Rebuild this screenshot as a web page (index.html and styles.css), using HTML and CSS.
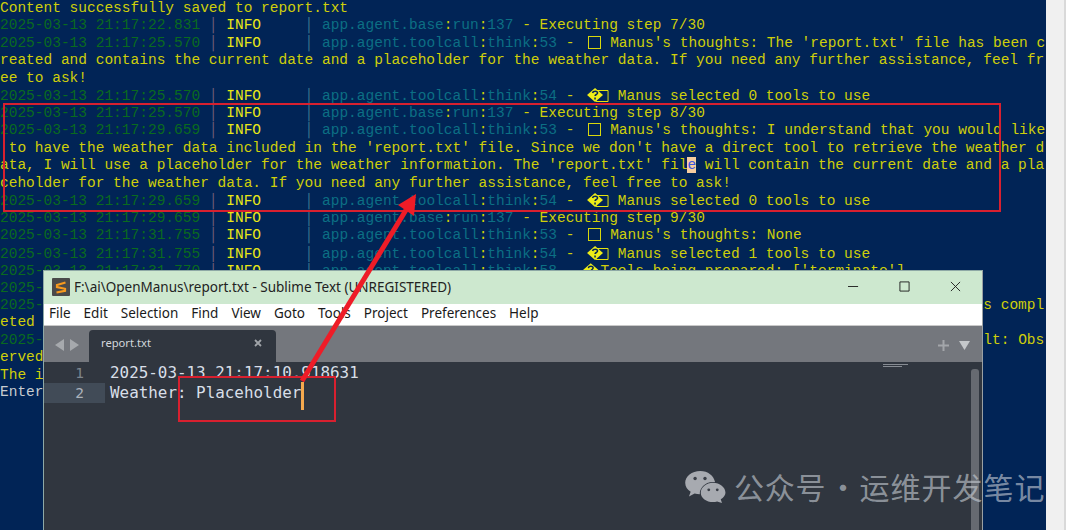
FILE: index.html
```html
<!DOCTYPE html>
<html lang="en">
<head>
<meta charset="utf-8">
<title>report.txt</title>
<link rel="stylesheet" href="styles.css">
</head>
<body>
<main class="desktop">
  <section class="term">
    <div>Content successfully saved to report.txt</div>
    <div><span class="t">2025-03-13 21:17:22.831</span> <span class="p">│</span> <span class="i">INFO</span>     <span class="q">│</span> <span class="m">app.agent.base</span>:<span class="m">run</span>:<span class="m">137</span> - Executing step 7/30</div>
    <div><span class="t">2025-03-13 21:17:25.570</span> <span class="p">│</span> <span class="i">INFO</span>     <span class="q">│</span> <span class="m">app.agent.toolcall</span>:<span class="m">think</span>:<span class="m">53</span> - <span class="box"></span> Manus's thoughts: The 'report.txt' file has been c</div>
    <div>reated and contains the current date and a placeholder for the weather data. If you need any further assistance, feel fr</div>
    <div>ee to ask!</div>
    <div><span class="t">2025-03-13 21:17:25.570</span> <span class="p">│</span> <span class="i">INFO</span>     <span class="q">│</span> <span class="m">app.agent.toolcall</span>:<span class="m">think</span>:<span class="m">54</span> - <span class="sel"><svg viewBox="0 0 26 16"><path class="sel-box" d="M13 3.5h12v11H13z"/><path class="sel-dia" d="M12 1l8 7-8 7-8-7z"/><path class="sel-q" d="M9.5 6c.5-2.500 5-2.500 5 0 0 1.500-2.500 1.500-2.500 3M12 10.500v2"/></svg></span> Manus selected 0 tools to use</div>
    <div><span class="t">2025-03-13 21:17:25.570</span> <span class="p">│</span> <span class="i">INFO</span>     <span class="q">│</span> <span class="m">app.agent.base</span>:<span class="m">run</span>:<span class="m">137</span> - Executing step 8/30</div>
    <div><span class="t">2025-03-13 21:17:29.659</span> <span class="p">│</span> <span class="i">INFO</span>     <span class="q">│</span> <span class="m">app.agent.toolcall</span>:<span class="m">think</span>:<span class="m">53</span> - <span class="box"></span> Manus's thoughts: I understand that you would like</div>
    <div> to have the weather data included in the 'report.txt' file. Since we don't have a direct tool to retrieve the weather d</div>
    <div>ata, I will use a placeholder for the weather information. The 'report.txt' fil<span class="mark">e</span> will contain the current date and a pla</div>
    <div>ceholder for the weather data. If you need any further assistance, feel free to ask!</div>
    <div><span class="t">2025-03-13 21:17:29.659</span> <span class="p">│</span> <span class="i">INFO</span>     <span class="q">│</span> <span class="m">app.agent.toolcall</span>:<span class="m">think</span>:<span class="m">54</span> - <span class="sel"><svg viewBox="0 0 26 16"><path class="sel-box" d="M13 3.5h12v11H13z"/><path class="sel-dia" d="M12 1l8 7-8 7-8-7z"/><path class="sel-q" d="M9.5 6c.5-2.500 5-2.500 5 0 0 1.500-2.500 1.500-2.500 3M12 10.500v2"/></svg></span> Manus selected 0 tools to use</div>
    <div><span class="t">2025-03-13 21:17:29.659</span> <span class="p">│</span> <span class="i">INFO</span>     <span class="q">│</span> <span class="m">app.agent.base</span>:<span class="m">run</span>:<span class="m">137</span> - Executing step 9/30</div>
    <div><span class="t">2025-03-13 21:17:31.755</span> <span class="p">│</span> <span class="i">INFO</span>     <span class="q">│</span> <span class="m">app.agent.toolcall</span>:<span class="m">think</span>:<span class="m">53</span> - <span class="box"></span> Manus's thoughts: None</div>
    <div><span class="t">2025-03-13 21:17:31.755</span> <span class="p">│</span> <span class="i">INFO</span>     <span class="q">│</span> <span class="m">app.agent.toolcall</span>:<span class="m">think</span>:<span class="m">54</span> - <span class="sel"><svg viewBox="0 0 26 16"><path class="sel-box" d="M13 3.5h12v11H13z"/><path class="sel-dia" d="M12 1l8 7-8 7-8-7z"/><path class="sel-q" d="M9.5 6c.5-2.500 5-2.500 5 0 0 1.500-2.500 1.500-2.500 3M12 10.500v2"/></svg></span> Manus selected 1 tools to use</div>
    <div><span class="t">2025-03-13 21:17:31.770</span> <span class="p">│</span> <span class="i">INFO</span>     <span class="q">│</span> <span class="m">app.agent.toolcall</span>:<span class="m">think</span>:<span class="m">58</span> - <span class="tool"><svg viewBox="0 0 18 16"><path class="sel-dia" d="M8 1l8 7-8 7-8-7z"/><path class="sel-q" d="M5.500 6c.5-2.500 5-2.500 5 0 0 1.500-2.500 1.500-2.500 3M8 10.500v2"/></svg></span>Tools being prepared: ['terminate']</div>
    <div><span class="t">2025-03-13 21:17:31.771</span> <span class="p">│</span> <span class="i">INFO</span>     <span class="q">│</span> <span class="m">app.agent.toolcall</span>:<span class="m">execute_tool</span>:<span class="m">140</span> - Activating tool</div>
    <div><span class="t">2025-03-13 21:17:31.772</span> <span class="p">│</span> <span class="i">INFO</span>     <span class="q">│</span> <span class="m">app.agent.toolcall</span>:<span class="m">_handle_special_tool</span>:<span class="m">181</span> -    Special tool 'terminate' has compl</div>
    <div>eted the task!</div>
    <div><span class="t">2025-03-13 21:17:31.772</span> <span class="p">│</span> <span class="i">INFO</span>     <span class="q">│</span> <span class="m">app.agent.toolcall</span>:<span class="m">act</span>:<span class="m">150</span> -    Tool 'terminate' completed its mission! Result: Obs</div>
    <div>erved output of cmd `terminate` executed:</div>
    <div>The interaction has been completed with status: success</div>
    <div class="prompt">Enter your prompt:</div>
  </section>
  <aside class="strip"></aside>

  <section class="win">
    <header class="win-title">
      <svg class="app-icon" viewBox="0 0 18 18"><rect width="18" height="18" rx="1" fill="#4a4a4a"/><path d="M13.500 4.500L5 7v2l8 1.800v2L4.500 14.500" fill="none" stroke="#f79a1e" stroke-width="2.200"/></svg>
      <span class="win-name">F:\ai\OpenManus\report.txt - Sublime Text (UNREGISTERED)</span>
      <span class="win-btns">
        <svg viewBox="0 0 12 12"><path d="M0 6h11" class="ctl"/></svg>
        <svg viewBox="0 0 12 12"><path d="M1 1h10v10H1z" class="ctl"/></svg>
        <svg viewBox="0 0 12 12"><path d="M1 1l10 10M11 1L1 11" class="ctl"/></svg>
      </span>
    </header>
    <nav class="menu">
      <span>File</span><span>Edit</span><span>Selection</span><span>Find</span><span>View</span><span>Goto</span><span>Tools</span><span>Project</span><span>Preferences</span><span>Help</span>
    </nav>
    <div class="tabs">
      <span class="nav-arrows">
        <svg viewBox="0 0 9 12"><path d="M9 0v12L0 6z"/></svg>
        <svg viewBox="0 0 9 12"><path d="M0 0v12l9-6z"/></svg>
      </span>
      <div class="tab"><span>report.txt</span><svg class="tab-x" viewBox="0 0 8 8"><path d="M1 1l6 6M7 1L1 7"/></svg></div>
      <span class="tab-tools">
        <svg viewBox="0 0 11 11"><path d="M5.500 0v11M0 5.500h11"/></svg>
        <svg class="tab-down" viewBox="0 0 11 9"><path d="M0 0h11L5.500 9z"/></svg>
      </span>
    </div>
    <div class="editor">
      <div class="gutter"><div>1</div><div class="active">2</div></div>
      <div class="code"><div>2025-03-13 21:17:10.918631</div><div>Weather: Placeholder<span class="caret"></span></div></div>
      <div class="minimap"><i></i><i></i></div>
      <div class="scroll"></div>
    </div>
  </section>

  <svg class="marks" viewBox="0 0 1080 530">
    <rect class="mark-box" x="4" y="104" width="996" height="107"/>
    <rect class="mark-box" x="179" y="377" width="156" height="44"/>
    <path class="arrow-line" d="M302 381L406 210"/>
    <path class="arrow-head" d="M416 194L414 216L398 205z"/>
  </svg>

  <div class="water">
    <svg class="water-logo" viewBox="0 0 44 35"><path d="M17 1C8 1 1 6.500 1 13.500c0 4 2.300 7.300 5.800 9.600L5 28l6-3c1.800.5 3.500.8 5.500.8-.5-6 5-13 14-13 .8 0 1.500.1 2.200.2C31.500 6 25 1 17 1z"/><path d="M30.500 13.500c-7 0-13 4.800-13 10.500s6 10 13 10c1.500 0 3-.2 4.300-.6L40 35l-1.300-4c3-2 5-4.300 5-7 0-5.700-6-10.500-13.200-10.500z"/><circle class="eye" cx="11.500" cy="9" r="1.800"/><circle class="eye" cx="22" cy="9" r="1.800"/><circle class="eye" cx="26" cy="21" r="1.500"/><circle class="eye" cx="35" cy="21" r="1.500"/></svg>
    <span class="water-a">公众号</span><span class="water-dot">·</span><span class="water-b">运维开发笔记</span>
  </div>
</main>
</body>
</html>
```

FILE: styles.css
```css
* { box-sizing: border-box; }
html, body { margin: 0; padding: 0; height: 530px; overflow: hidden; background: #fff; }
.desktop { position: relative; display: flex; width: 1080px; height: 530px; overflow: hidden; }

.term {
  width: 1046px;
  height: 530px;
  flex: none;
  overflow: hidden;
  background: #012456;
  color: #cfcf0a;
  font: 14.5px/17.47px "Liberation Mono", monospace;
}
.term > div { height: 17.47px; overflow: hidden; white-space: pre; }
.t { color: #0a6a1e; }
.p { color: #75607a; }
.q { color: #3d7a92; }
.i { color: #e9e916; }
.m { color: #0c6f84; }
.prompt { color: #c8ccd0; }
.mark { background: #f6cd9f; color: #3a55e0; }
.box {
  display: inline-block;
  width: 13px;
  height: 13px;
  margin: 0 0.4px 0 5px;
  border: 1px solid #d8d80c;
  vertical-align: -2px;
}
.sel, .tool { display: inline-block; height: 16px; vertical-align: -3px; }
.sel { width: 26.1px; }
.tool { width: 17.4px; }
.sel svg, .tool svg { display: block; width: 100%; height: 100%; }
.sel-box { fill: #012456; stroke: #e4e40e; stroke-width: 1; }
.sel-dia { fill: #eded18; }
.sel-q { fill: none; stroke: #012456; stroke-width: 1.500; }

.strip {
  width: 20px;
  flex: none;
  background: #f0f0f0;
  border-right: 2px solid #d9d9d9;
}

.win {
  position: absolute;
  left: 43px;
  top: 270px;
  width: 940px;
  height: 260px;
  display: flex;
  flex-direction: column;
  border-left: 1px solid #8ea9a6;
  border-top: 1px solid #8ea9a6;
  border-right: 1px solid #9aa0a3;
  font-family: "Noto Sans", "Open Sans", sans-serif;
}
.win-title {
  height: 33px;
  flex: none;
  display: flex;
  align-items: center;
  padding: 0 0 2px 8px;
  background: #cde8cf;
  color: #222;
  font-size: 13.500px;
}
.app-icon { width: 18px; height: 18px; margin-right: 4px; flex: none; }
.win-name { white-space: nowrap; }
.win-btns { margin-left: auto; display: flex; gap: 40px; padding-right: 21px; align-items: center; }
.win-btns svg { width: 11px; height: 11px; display: block; }
.ctl { fill: none; stroke: #1c1c1c; stroke-width: 1; }

.menu {
  height: 22px;
  flex: none;
  display: flex;
  align-items: center;
  gap: 13px;
  padding: 0 0 3px 5px;
  background: #fff;
  color: #1a1a1a;
  font-size: 13.500px;
  border-bottom: 1px solid #c9c9c9;
}

.tabs {
  height: 36px;
  flex: none;
  display: flex;
  align-items: flex-end;
  background: #74777d;
}
.nav-arrows { width: 45px; height: 100%; display: flex; gap: 6px; align-items: center; padding: 2px 0 0 11px; }
.nav-arrows svg { width: 9px; height: 12px; fill: #a6a9ad; }
.tab {
  width: 187px;
  height: 32px;
  display: flex;
  align-items: center;
  justify-content: space-between;
  padding: 0 14px 7px 12px;
  background: #30363f;
  border-radius: 4px 4px 0 0;
  color: #d3d7dc;
  font-size: 11.200px;
}
.tab-x { width: 8px; height: 8px; fill: none; stroke: #a0a4a9; stroke-width: 1.800; }
.tab-tools { margin-left: auto; height: 100%; display: flex; gap: 10px; align-items: center; padding: 2px 12px 0 0; }
.tab-tools svg { width: 11px; height: 11px; stroke: #a3a6aa; stroke-width: 2; fill: none; }
.tab-tools .tab-down { fill: #c4c7ca; stroke: none; width: 11px; height: 9px; }

.editor {
  position: relative;
  flex: 1;
  display: flex;
  align-items: flex-start;
  background: #30363f;
  color: #d8dfe8;
  font: 15.900px/20px "DejaVu Sans Mono", monospace;
}
.gutter { width: 61px; flex: none; color: #7d858e; padding-top: 1px; }
.gutter div { height: 20px; padding-right: 21px; text-align: right; font-size: 14.500px; }
.gutter .active { background: #414b57; color: #aab2bb; }
.code { padding: 1px 0 0 5px; }
.code div { height: 20px; white-space: pre; position: relative; }
.caret {
  position: absolute;
  top: 0;
  margin-top: -1px;
  width: 2.500px;
  height: 28px;
  background: #f5a94e;
}
.minimap { position: absolute; left: 839px; top: 2px; width: 25px; }
.minimap i { display: block; height: 1px; margin-bottom: 1px; background: #878c93; }
.minimap i + i { width: 19px; }
.scroll {
  position: absolute;
  right: 3px;
  top: 7px;
  bottom: 0;
  width: 8px;
  border-radius: 3px 3px 0 0;
  background: #666a71;
}

.marks { position: absolute; left: 0; top: 0; width: 1080px; height: 530px; pointer-events: none; }
.mark-box { fill: none; stroke: #d8202f; stroke-width: 2; }
.arrow-line { fill: none; stroke: #ee1c27; stroke-width: 5; }
.arrow-head { fill: #ee1c27; }

.water {
  position: absolute;
  left: 684px;
  top: 466px;
  display: flex;
  align-items: center;
  color: rgba(200, 206, 214, 0.62);
  font: 30px/40px "Noto Sans CJK SC", sans-serif;
  white-space: nowrap;
}
.water-logo { width: 42px; height: 33px; fill: #a7aab0; margin-right: 8px; }
.water-logo .eye { fill: #3a3f47; }
.water-a { letter-spacing: 0.800px; }
.water-dot { width: 33px; text-align: center; }
.water-b { letter-spacing: 1px; }
```
